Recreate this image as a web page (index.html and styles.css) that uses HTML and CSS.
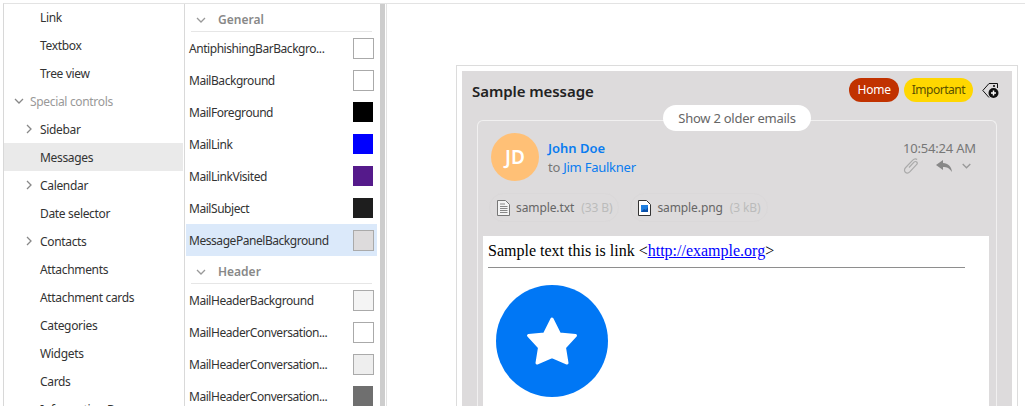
FILE: index.html
```html
<!DOCTYPE html>
<html lang="en">
<head>
<meta charset="utf-8">
<title>Theme editor</title>
<link rel="stylesheet" href="styles.css">
</head>
<body>
<div class="app">
  <nav class="tree">
    <div class="node"><span class="label">Link</span></div>
    <div class="node"><span class="label">Textbox</span></div>
    <div class="node"><span class="label">Tree view</span></div>
    <div class="node group"><svg class="chev down" viewBox="0 0 10 10"><path d="M1 3l4 4 4-4"/></svg><span>Special controls</span></div>
    <div class="node"><svg class="chev right" viewBox="0 0 10 10"><path d="M3 1l4 4-4 4"/></svg><span class="label">Sidebar</span></div>
    <div class="node selected"><span class="label">Messages</span></div>
    <div class="node"><svg class="chev right" viewBox="0 0 10 10"><path d="M3 1l4 4-4 4"/></svg><span class="label">Calendar</span></div>
    <div class="node"><span class="label">Date selector</span></div>
    <div class="node"><svg class="chev right" viewBox="0 0 10 10"><path d="M3 1l4 4-4 4"/></svg><span class="label">Contacts</span></div>
    <div class="node"><span class="label">Attachments</span></div>
    <div class="node"><span class="label">Attachment cards</span></div>
    <div class="node"><span class="label">Categories</span></div>
    <div class="node"><span class="label">Widgets</span></div>
    <div class="node"><span class="label">Cards</span></div>
    <div class="node"><span class="label">Information Bar</span></div>
  </nav>
  <section class="props">
    <div class="prop-head"><svg class="chev-small" viewBox="0 0 10 10"><path d="M1 3l4 4 4-4"/></svg><span>General</span></div>
    <div class="prop"><span class="name">AntiphishingBarBackgro...</span><i class="swatch c-white"></i></div>
    <div class="prop"><span class="name">MailBackground</span><i class="swatch c-white"></i></div>
    <div class="prop"><span class="name">MailForeground</span><i class="swatch c-black"></i></div>
    <div class="prop"><span class="name">MailLink</span><i class="swatch c-blue"></i></div>
    <div class="prop"><span class="name">MailLinkVisited</span><i class="swatch c-purple"></i></div>
    <div class="prop"><span class="name">MailSubject</span><i class="swatch c-dark"></i></div>
    <div class="prop active"><span class="name">MessagePanelBackground</span><i class="swatch c-panel"></i></div>
    <div class="prop-head"><svg class="chev-small" viewBox="0 0 10 10"><path d="M1 3l4 4 4-4"/></svg><span>Header</span></div>
    <div class="prop"><span class="name">MailHeaderBackground</span><i class="swatch c-f4"></i></div>
    <div class="prop"><span class="name">MailHeaderConversation...</span><i class="swatch c-white"></i></div>
    <div class="prop"><span class="name">MailHeaderConversation...</span><i class="swatch c-ee"></i></div>
    <div class="prop"><span class="name">MailHeaderConversation...</span><i class="swatch c-gray"></i></div>
  </section>
  <div class="scroll"><div class="thumb"></div></div>
  <main class="preview">
    <div class="frame">
      <div class="panel">
        <header class="subject">
          <h1>Sample message</h1>
          <span class="tag home">Home</span>
          <span class="tag important">Important</span>
          <svg class="tag-add" width="17" height="17" viewBox="0 0 17 17"><path class="tag-line" d="M7 15.500L.8 8.500 7 1.500h8.500V6"/><circle cx="12" cy="4" r="1"/><circle class="plus-bg" cx="11.500" cy="11" r="5"/><path class="plus" d="M11.500 8.500v5M9 11h5"/></svg>
        </header>
        <div class="older-wrap"><button class="older">Show 2 older emails</button></div>
        <article class="mail">
          <div class="mail-head">
            <div class="avatar">JD</div>
            <div class="who">
              <div class="from">John Doe</div>
              <div class="to">to <a>Jim Faulkner</a></div>
            </div>
            <div class="meta">
              <div class="time">10:54:24 AM</div>
              <div class="actions">
                <svg class="clip" width="16" height="16" viewBox="0 0 16 16"><path d="M6 9.500l5-5.300c.9-.9 2-.9 2.700-.2s.7 1.800-.2 2.700L7 13.700c-1.500 1.500-3.500 1.700-4.700.6S1.200 11 2.700 9.500L9.500 2.400c1.500-1.500 3.300-1.800 4.600-.8"/></svg>
                <svg class="reply" width="16" height="12" viewBox="0 0 16 12"><path d="M7 0L0 5l7 5V7c4 0 6.500 1.300 9 5C15.500 6.500 12 3.300 7 3z"/></svg>
                <svg class="more" width="9" height="6" viewBox="0 0 9 6"><path d="M.7 1l3.800 3.800L8.300 1"/></svg>
              </div>
            </div>
          </div>
          <div class="files">
            <div class="file">
              <svg width="13" height="16" viewBox="0 0 13 16"><path class="doc" d="M.5.500h8l4 4v11H.500z"/><path class="lines" d="M3 4h5M3 6.500h7.500M3 8.500h7.500M3 10.500h7.500M3 12.500h7.500"/></svg>
              <span class="fname">sample.txt</span><span class="fsize">(33 B)</span>
            </div>
            <div class="file">
              <svg width="13" height="16" viewBox="0 0 13 16"><path class="doc dark" d="M.5.500h8l4 4v11H.500z"/><rect class="img" x="3" y="5" width="7" height="7"/><path class="imgh" d="M3 12l3-3 2 1 2-3v5z"/></svg>
              <span class="fname">sample.png</span><span class="fsize">(3 kB)</span>
            </div>
          </div>
          <div class="body">
            <p>Sample text this is link &lt;<a href="#">http://example.org</a>&gt;</p>
            <hr>
            <div class="logo">
              <svg width="52" height="50" viewBox="0 0 52 50"><path d="M26 3L33.500 18 49.500 19.500 38.500 31.500 41 47 26 40.500 11 47 13.500 31.500 2.500 19.500 18.500 18Z"/></svg>
            </div>
          </div>
        </article>
      </div>
    </div>
  </main>
</div>
</body>
</html>
```

FILE: styles.css
```css
html, body { margin: 0; padding: 0; height: 406px; overflow: hidden; background: #fff; }
body { font-family: "Noto Sans", "Open Sans", sans-serif; font-size: 12px; color: #333; }
.app { display: flex; height: 403px; margin: 3px 0 0 3px; border-top: 1px solid #e3e3e3; border-left: 1px solid #d8d8d8; overflow: hidden; }

.tree { width: 180px; flex: none; border-right: 1px solid #d9d9d9; }
.node { height: 28px; display: flex; align-items: center; position: relative; padding-left: 36px; box-sizing: border-box; white-space: nowrap; letter-spacing: -.33px; }
.node.group { padding-left: 26px; color: #999; }
.node.selected { background: #eaeaea; width: 179px; }
.node .chev { position: absolute; width: 10px; height: 10px; fill: none; stroke: #888; stroke-width: 1.300; }
.chev.right { left: 20px; }
.chev.down { left: 10px; }
.node:first-child { margin-top: -1px; }

.props { width: 191px; flex: none; padding-left: 1px; overflow: hidden; }
.prop-head { height: 28px; margin: 0 5px; padding: 4px 0 0 5px; display: flex; align-items: center; border-bottom: 1px solid #e6e6e6; box-sizing: border-box; font-weight: 600; color: #888; gap: 12px; }
.chev-small { width: 10px; height: 10px; fill: none; stroke: #999; stroke-width: 1.300; }
.prop { height: 32px; display: flex; align-items: center; justify-content: space-between; padding: 0 3px; box-sizing: border-box; letter-spacing: -.45px; white-space: nowrap; }
.prop.active { background: #dbe9fa; }
.swatch { display: block; width: 21px; height: 21px; box-sizing: border-box; border: 1px solid #aaa; }
.c-white { background: #fff; }
.c-black { background: #000; border: 0; width: 20px; height: 20px; margin-right: 1px; }
.c-blue { background: #00f; border: 0; width: 20px; height: 20px; margin-right: 1px; }
.c-purple { background: #551a8b; border: 0; width: 20px; height: 20px; margin-right: 1px; }
.c-dark { background: #1e1e1e; border: 0; width: 20px; height: 20px; margin-right: 1px; }
.c-panel { background: #dddbdc; }
.c-f4 { background: #f4f4f4; }
.c-ee { background: #eee; }
.c-gray { background: #6f6f6f; border: 0; width: 20px; height: 20px; margin-right: 1px; }

.scroll { width: 10px; flex: none; border-right: 1px solid #e3e3e3; padding-left: 3px; box-sizing: border-box; }
.thumb { width: 5px; height: 100%; background: #cdcdcd; }

.preview { flex: 1; padding: 61px 7px 0 69px; min-width: 0; }
.frame { border: 1px solid #dcdcdc; padding: 5px; height: 400px; }
.panel { background: #dddbdc; height: 100%; padding: 0 15px; }
.subject { display: flex; align-items: center; height: 38px; gap: 5px; margin-right: -1px; }
.subject h1 { margin: 1px auto 0 -5px; font-size: 15px; font-weight: 600; color: #222; letter-spacing: -.07px; }
.tag { height: 24px; line-height: 24px; border-radius: 12px; padding: 0 8px; letter-spacing: -.2px; }
.home { background: #c13200; color: #fff; }
.important { background: #ffd700; color: #5a5000; letter-spacing: -.5px; }
.tag-add { margin: 0 -1px 0 4px; }
.tag-line { fill: none; stroke: #111; stroke-width: 1; }
.plus-bg { fill: #111; }
.plus { stroke: #fff; stroke-width: 1.500; }

.older-wrap { display: flex; justify-content: center; height: 11px; position: relative; z-index: 1; }
.older { height: 26px; margin-top: -4px; border: 0; border-radius: 13px; background: #fff; color: #666; font: inherit; font-size: 13px; padding: 0 15px; letter-spacing: -.26px; }
.mail { border: 1px solid #f1f0f0; border-bottom: 0; border-radius: 6px 6px 0 0; padding: 12px 7px 0 5px; height: 400px; }
.mail-head { display: flex; align-items: flex-start; padding-left: 8px; }
.avatar { width: 48px; height: 48px; border-radius: 50%; background: #ffc076; color: #fff; font-size: 19px; font-weight: 600; display: flex; align-items: center; justify-content: center; }
.who { margin: 6px 0 0 9px; flex: 1; font-size: 13px; line-height: 19px; letter-spacing: -.25px; }
.from { color: #0a7cf0; font-weight: 600; letter-spacing: 0; }
.to { color: #777; }
.to a { color: #0a7cf0; }
.meta { margin: 7px 14px 0 0; width: 72px; line-height: 16px; color: #777; }
.time { white-space: nowrap; letter-spacing: -.2px; font-size: 13px; }
.actions { display: flex; align-items: center; height: 20px; }
.clip { fill: none; stroke: #aaa; stroke-width: 1.200; }
.reply { fill: #888; margin-left: 17px; }
.more { fill: none; stroke: #999; stroke-width: 1.300; margin-left: 10px; }

.files { display: flex; gap: 11px; padding: 12px 0 0 6px; }
.file { display: flex; align-items: center; height: 29px; gap: 7px; padding: 0 6px 0 7px; border: 1px solid #dad8d9; border-radius: 15px; box-sizing: border-box; }
.file svg { margin-right: -1px; }
.fname { color: #666; letter-spacing: -.1px; }
.fsize { color: #bbb; letter-spacing: -.1px; }
.doc { fill: #f4f4f4; stroke: #777; stroke-width: 1; }
.doc.dark { fill: #fff; stroke: #333; }
.lines { stroke: #888; stroke-width: 1; }
.img { fill: #1f7fe0; }
.imgh { fill: #0b4fa8; }

.body { background: #fff; margin-top: 14px; padding: 5px; height: 300px; font-family: "Liberation Serif", serif; font-size: 16px; color: #000; }
.body p { margin: 0; line-height: 19px; }
.body a { color: #00f; text-decoration: underline; }
.body hr { margin: 7px 19px 0 0; border: 0; border-top: 1px solid #8e8e8e; height: 1px; }
.logo { width: 112px; height: 112px; margin: 16px 0 0 8px; border-radius: 50%; background: #0077f5; display: flex; align-items: center; justify-content: center; }
.logo svg { fill: #fff; stroke: #fff; stroke-width: 3; stroke-linejoin: round; }
```
